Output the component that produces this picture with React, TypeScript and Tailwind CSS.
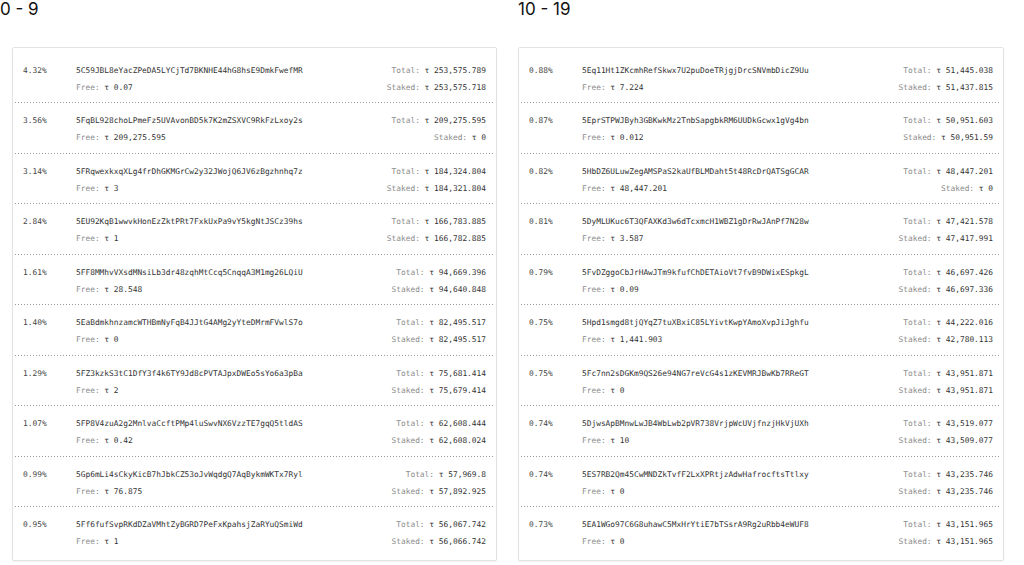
import React from "react";

type Row = { pct: string; addr: string; free: string; total: string; staked: string };

const left: Row[] = [
  { pct: "4.32%", addr: "5C59JBL8eYacZPeDA5LYCjTd7BKNHE44hG8hsE9DmkFwefMR", free: "0.07", total: "253,575.789", staked: "253,575.718" },
  { pct: "3.56%", addr: "5FqBL928choLPmeFz5UVAvonBD5k7K2mZSXVC9RkFzLxoy2s", free: "209,275.595", total: "209,275.595", staked: "0" },
  { pct: "3.14%", addr: "5FRqwexkxqXLg4frDhGKMGrCw2y32JWojQ6JV6zBgzhnhq7z", free: "3", total: "184,324.804", staked: "184,321.804" },
  { pct: "2.84%", addr: "5EU92KqB1wwvkHonEzZktPRt7FxkUxPa9vY5kgNtJSCz39hs", free: "1", total: "166,783.885", staked: "166,782.885" },
  { pct: "1.61%", addr: "5FF8MMhvVXsdMNsiLb3dr48zqhMtCcq5CnqqA3M1mg26LQiU", free: "28.548", total: "94,669.396", staked: "94,640.848" },
  { pct: "1.40%", addr: "5EaBdmkhnzamcWTHBmNyFqB4JJtG4AMg2yYteDMrmFVwlS7o", free: "0", total: "82,495.517", staked: "82,495.517" },
  { pct: "1.29%", addr: "5FZ3kzkS3tC1DfY3f4k6TY9Jd8cPVTAJpxDWEo5sYo6a3pBa", free: "2", total: "75,681.414", staked: "75,679.414" },
  { pct: "1.07%", addr: "5FP8V4zuA2g2MnlvaCcftPMp4luSwvNX6VzzTE7gqQ5tldAS", free: "0.42", total: "62,608.444", staked: "62,608.024" },
  { pct: "0.99%", addr: "5Gp6mLi4sCkyKicB7hJbkCZ53oJvWqdgQ7AqBykmWKTx7Ryl", free: "76.875", total: "57,969.8", staked: "57,892.925" },
  { pct: "0.95%", addr: "5Ff6fufSvpRKdDZaVMhtZyBGRD7PeFxKpahsjZaRYuQSmiWd", free: "1", total: "56,067.742", staked: "56,066.742" },
];

const right: Row[] = [
  { pct: "0.88%", addr: "5Eq11Ht1ZKcmhRefSkwx7U2puDoeTRjgjDrcSNVmbDicZ9Uu", free: "7.224", total: "51,445.038", staked: "51,437.815" },
  { pct: "0.87%", addr: "5EprSTPWJByh3GBKwkMz2TnbSapgbkRM6UUDkGcwx1gVg4bn", free: "0.012", total: "50,951.603", staked: "50,951.59" },
  { pct: "0.82%", addr: "5HbDZ6ULuwZegAMSPaS2kaUfBLMDaht5t48RcDrQATSgGCAR", free: "48,447.201", total: "48,447.201", staked: "0" },
  { pct: "0.81%", addr: "5DyMLUKuc6T3QFAXKd3w6dTcxmcH1WBZ1gDrRwJAnPf7N28w", free: "3.587", total: "47,421.578", staked: "47,417.991" },
  { pct: "0.79%", addr: "5FvDZggoCbJrHAwJTm9kfufChDETAioVt7fvB9DWixESpkgL", free: "0.09", total: "46,697.426", staked: "46,697.336" },
  { pct: "0.75%", addr: "5Hpd1smgd8tjQYqZ7tuXBxiC85LYivtKwpYAmoXvpJiJghfu", free: "1,441.903", total: "44,222.016", staked: "42,780.113" },
  { pct: "0.75%", addr: "5Fc7nn2sDGKm9QS26e94NG7reVcG4s1zKEVMRJBwKb7RReGT", free: "0", total: "43,951.871", staked: "43,951.871" },
  { pct: "0.74%", addr: "5DjwsApBMnwLwJB4WbLwb2pVR738VrjpWcUVjfnzjHkVjUXh", free: "10", total: "43,519.077", staked: "43,509.077" },
  { pct: "0.74%", addr: "5ES7RB2Qm45CwMNDZkTvfF2LxXPRtjzAdwHafrocftsTtlxy", free: "0", total: "43,235.746", staked: "43,235.746" },
  { pct: "0.73%", addr: "5EA1WGo97C6G8uhawC5MxHrYtiE7bTSsrA9Rg2uRbb4eWUF8", free: "0", total: "43,151.965", staked: "43,151.965" },
];

function RowItem({ r, last }: { r: Row; last: boolean }) {
  return (
    <div>
      <div className="flex items-start px-[10px] pt-[9px] pb-[6.5px] text-[7.85px] leading-[17px]">
        <div className="w-[53px] shrink-0 text-[#444]">{r.pct}</div>
        <div className="flex flex-col">
          <span className="text-[#333]">{r.addr}</span>
          <span>
            <span className="text-[#8a8a8a]">Free: </span>
            <span className="text-[#333]">τ {r.free}</span>
          </span>
        </div>
        <div className="ml-auto flex flex-col items-end">
          <span>
            <span className="text-[#8a8a8a]">Total: </span>
            <span className="text-[#333]">τ {r.total}</span>
          </span>
          <span>
            <span className="text-[#8a8a8a]">Staked: </span>
            <span className="text-[#333]">τ {r.staked}</span>
          </span>
        </div>
      </div>
      {!last && (
        <div className="h-px mx-[2px] bg-[linear-gradient(to_right,#9a9a9a_1px,transparent_1px)] bg-[length:3px_1px] bg-repeat-x" />
      )}
    </div>
  );
}

function Card({ rows }: { rows: Row[] }) {
  return (
    <div className="border border-[#e2e2e2] rounded-[2px] bg-white pt-[4.5px] pb-[3.5px] shadow-[0_1px_2px_rgba(0,0,0,0.06)]">
      {rows.map((r, i) => (
        <RowItem key={i} r={r} last={i === rows.length - 1} />
      ))}
    </div>
  );
}

export default function App() {
  return (
    <div
      className="w-[1024px] h-[565px] bg-white overflow-hidden flex gap-[21px]"
      style={{ fontFamily: '"DejaVu Sans Mono", "Liberation Mono", monospace' }}
    >
      <div className="w-[497px] shrink-0">
        <h2
          className="text-[17px] leading-[18px] text-[#111] h-[47px]"
          style={{ fontFamily: 'Inter, "Noto Sans", sans-serif' }}
        >
          0 - 9
        </h2>
        <div className="ml-[12px]">
          <Card rows={left} />
        </div>
      </div>
      <div className="w-[486px] shrink-0">
        <h2
          className="text-[17px] leading-[18px] text-[#111] h-[47px]"
          style={{ fontFamily: 'Inter, "Noto Sans", sans-serif' }}
        >
          10 - 19
        </h2>
        <Card rows={right} />
      </div>
    </div>
  );
}
